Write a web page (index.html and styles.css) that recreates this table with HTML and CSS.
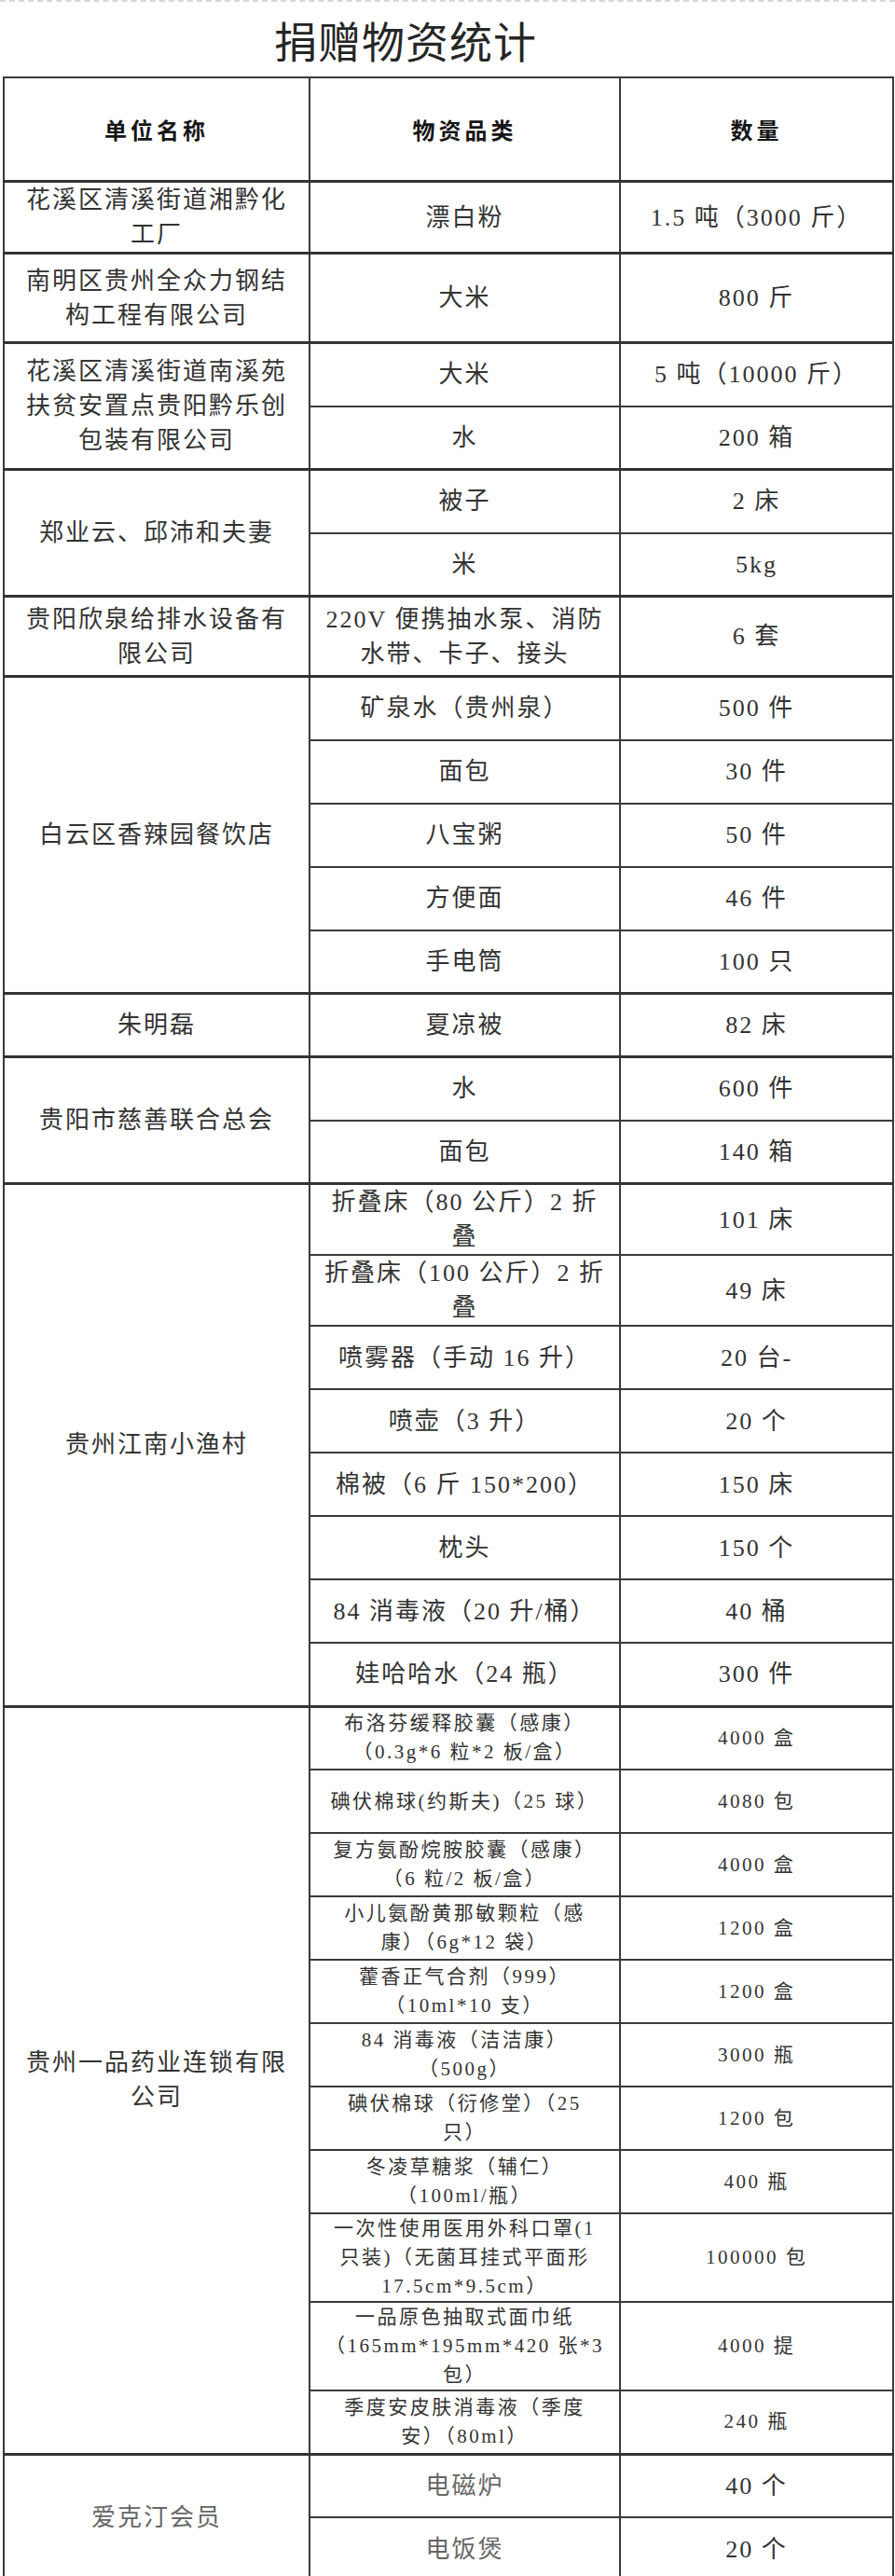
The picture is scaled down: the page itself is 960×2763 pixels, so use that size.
FILE: index.html
```html
<!DOCTYPE html>
<html lang="zh-CN">
<head>
<meta charset="utf-8">
<title>捐赠物资统计</title>
<link rel="stylesheet" href="styles.css">
</head>
<body>
<div class="page">
  <h1 class="title">捐赠物资统计</h1>
  <table class="sheet">
    <colgroup>
      <col class="c-unit">
      <col class="c-item">
      <col class="c-qty">
    </colgroup>
    <thead>
      <tr class="head">
        <th>单位名称</th>
        <th>物资品类</th>
        <th>数量</th>
      </tr>
    </thead>
    <tbody>
      <tr class="r77">
        <td>花溪区清溪街道湘黔化<br>工厂</td>
        <td>漂白粉</td>
        <td>1.5 吨（3000 斤）</td>
      </tr>
    </tbody>
    <tbody>
      <tr class="r96">
        <td>南明区贵州全众力钢结<br>构工程有限公司</td>
        <td>大米</td>
        <td>800 斤</td>
      </tr>
    </tbody>
    <tbody>
      <tr>
        <td rowspan="2">花溪区清溪街道南溪苑<br>扶贫安置点贵阳黔乐创<br>包装有限公司</td>
        <td>大米</td>
        <td>5 吨（10000 斤）</td>
      </tr>
      <tr>
        <td>水</td>
        <td>200 箱</td>
      </tr>
    </tbody>
    <tbody>
      <tr>
        <td rowspan="2">郑业云、邱沛和夫妻</td>
        <td>被子</td>
        <td>2 床</td>
      </tr>
      <tr>
        <td>米</td>
        <td>5kg</td>
      </tr>
    </tbody>
    <tbody>
      <tr class="r86">
        <td>贵阳欣泉给排水设备有<br>限公司</td>
        <td>220V 便携抽水泵、消防<br>水带、卡子、接头</td>
        <td>6 套</td>
      </tr>
    </tbody>
    <tbody>
      <tr>
        <td rowspan="5">白云区香辣园餐饮店</td>
        <td>矿泉水（贵州泉）</td>
        <td>500 件</td>
      </tr>
      <tr>
        <td>面包</td>
        <td>30 件</td>
      </tr>
      <tr>
        <td>八宝粥</td>
        <td>50 件</td>
      </tr>
      <tr>
        <td>方便面</td>
        <td>46 件</td>
      </tr>
      <tr>
        <td>手电筒</td>
        <td>100 只</td>
      </tr>
    </tbody>
    <tbody>
      <tr>
        <td>朱明磊</td>
        <td>夏凉被</td>
        <td>82 床</td>
      </tr>
    </tbody>
    <tbody>
      <tr>
        <td rowspan="2">贵阳市慈善联合总会</td>
        <td>水</td>
        <td>600 件</td>
      </tr>
      <tr>
        <td>面包</td>
        <td>140 箱</td>
      </tr>
    </tbody>
    <tbody>
      <tr class="r76">
        <td rowspan="8">贵州江南小渔村</td>
        <td>折叠床（80 公斤）2 折<br>叠</td>
        <td>101 床</td>
      </tr>
      <tr class="r76">
        <td>折叠床（100 公斤）2 折<br>叠</td>
        <td>49 床</td>
      </tr>
      <tr>
        <td>喷雾器（手动 16 升）</td>
        <td>20 台-</td>
      </tr>
      <tr>
        <td>喷壶（3 升）</td>
        <td>20 个</td>
      </tr>
      <tr>
        <td>棉被（6 斤 150*200）</td>
        <td>150 床</td>
      </tr>
      <tr>
        <td>枕头</td>
        <td>150 个</td>
      </tr>
      <tr>
        <td>84 消毒液（20 升/桶）</td>
        <td>40 桶</td>
      </tr>
      <tr>
        <td>娃哈哈水（24 瓶）</td>
        <td>300 件</td>
      </tr>
    </tbody>
    <tbody class="small">
      <tr>
        <td rowspan="11" class="big">贵州一品药业连锁有限<br>公司</td>
        <td>布洛芬缓释胶囊（感康）<br>（0.3g*6 粒*2 板/盒）</td>
        <td>4000 盒</td>
      </tr>
      <tr>
        <td>碘伏棉球(约斯夫)（25 球）</td>
        <td>4080 包</td>
      </tr>
      <tr>
        <td>复方氨酚烷胺胶囊（感康）<br>（6 粒/2 板/盒）</td>
        <td>4000 盒</td>
      </tr>
      <tr>
        <td>小儿氨酚黄那敏颗粒（感<br>康）（6g*12 袋）</td>
        <td>1200 盒</td>
      </tr>
      <tr>
        <td>藿香正气合剂（999）<br>（10ml*10 支）</td>
        <td>1200 盒</td>
      </tr>
      <tr>
        <td>84 消毒液（洁洁康）<br>（500g）</td>
        <td>3000 瓶</td>
      </tr>
      <tr>
        <td>碘伏棉球（衍修堂）（25<br>只）</td>
        <td>1200 包</td>
      </tr>
      <tr>
        <td>冬凌草糖浆（辅仁）<br>（100ml/瓶）</td>
        <td>400 瓶</td>
      </tr>
      <tr class="r94">
        <td>一次性使用医用外科口罩(1<br>只装)（无菌耳挂式平面形<br>17.5cm*9.5cm）</td>
        <td>100000 包</td>
      </tr>
      <tr class="r94">
        <td>一品原色抽取式面巾纸<br>（165mm*195mm*420 张*3<br>包）</td>
        <td>4000 提</td>
      </tr>
      <tr>
        <td>季度安皮肤消毒液（季度<br>安）（80ml）</td>
        <td>240 瓶</td>
      </tr>
    </tbody>
    <tbody>
      <tr>
        <td rowspan="2" class="light">爱克汀会员</td>
        <td class="light">电磁炉</td>
        <td>40 个</td>
      </tr>
      <tr>
        <td class="light">电饭煲</td>
        <td>20 个</td>
      </tr>
    </tbody>
  </table>
</div>
</body>
</html>
```

FILE: styles.css
```css
html, body {
  margin: 0;
  padding: 0;
  background: #ffffff;
}

body {
  font-family: "Liberation Serif", "Noto Sans CJK SC", serif;
  color: #333333;
}

.page {
  border-top: 2px dashed #d6d6d6;
}

.title {
  margin: 0;
  height: 80px;
  line-height: 80px;
  padding-left: 294px;
  font-family: "Noto Sans CJK SC", sans-serif;
  font-size: 46px;
  font-weight: 400;
  letter-spacing: 1px;
  color: #262626;
}

.sheet {
  border-collapse: collapse;
  table-layout: fixed;
  width: 954px;
  margin-left: 3px;
}

.c-unit { width: 328px; }
.c-item { width: 333px; }
.c-qty  { width: 293px; }

.sheet th,
.sheet td {
  border: 2px solid #3a3a3a;
  text-align: center;
  vertical-align: middle;
  padding: 0 4px;
  white-space: nowrap;
}

.sheet tbody {
  border-top: 3px solid #333333;
}

.sheet th {
  height: 109px;
  font-family: "Noto Sans CJK SC", sans-serif;
  font-size: 24px;
  font-weight: 700;
  letter-spacing: 4px;
  color: #151515;
}

.sheet td {
  font-size: 26px;
  line-height: 37px;
  letter-spacing: 2px;
  color: #333333;
}

.sheet tr {
  height: 68px;
}

.sheet tr.r77 { height: 77px; }
.sheet tr.r96 { height: 96px; }
.sheet tr.r86 { height: 86px; }
.sheet tr.r76 { height: 75px; }
.sheet tr.r94 { height: 94px; }

.sheet .small td {
  font-size: 21px;
  line-height: 31px;
  letter-spacing: 2.5px;
}

.sheet .small td.big {
  font-size: 26px;
  line-height: 37px;
  letter-spacing: 2px;
}

.sheet td.light {
  color: #666666;
}
```
